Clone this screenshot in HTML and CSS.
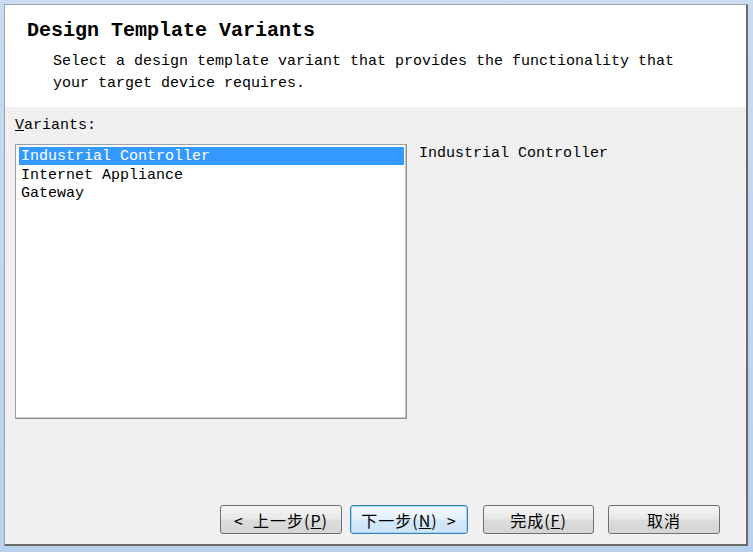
FILE: index.html
```html
<!DOCTYPE html>
<html lang="en">
<head>
  <meta charset="UTF-8">
  <title>Design Template Variants</title>
  <link rel="stylesheet" href="styles.css">
</head>
<body>

  <div class="window">

    <!-- Header -->
    <div class="header">
      <h1>Design Template Variants</h1>
      <p>Select a design template variant that provides the functionality that<br>your target device requires.</p>
    </div>

    <!-- Body -->
    <div class="panel">
      <div class="label"><u>V</u>ariants:</div>

      <div class="row">
        <div class="listbox">
          <div class="item selected">Industrial Controller</div>
          <div class="item">Internet Appliance</div>
          <div class="item">Gateway</div>
        </div>
        <div class="desc">Industrial Controller</div>
      </div>

      <!-- Wizard buttons -->
      <div class="buttons">
        <button class="btn btn-back">&lt;&nbsp; 上一步(<u>P</u>)</button>
        <button class="btn btn-next focused">下一步(<u>N</u>)&nbsp; &gt;</button>
        <button class="btn btn-finish">完成(<u>F</u>)</button>
        <button class="btn btn-cancel">取消</button>
      </div>
    </div>

  </div>

</body>
</html>
```

FILE: styles.css
```css
body {
  margin: 0;
  width: 753px;
  height: 552px;
  background: linear-gradient(#c9dcf0, #b9d1eb);
  font-family: "Liberation Mono", "Noto Sans CJK SC", monospace;
  color: #000;
  overflow: hidden;
}

.window {
  margin: 4px 5px 0 4px;
  width: 741px;
  height: 539px;
  border-left: 1px solid #9aa3ad;
  border-top: 1px solid #9aa3ad;
  border-right: 2px solid #6a6a6a;
  border-bottom: 2px solid #6a6a6a;
  display: flex;
  flex-direction: column;
}

.header {
  background-color: #fff;
  height: 102px;
  box-sizing: border-box;
  padding: 15px 0 0 22px;
}

.header h1 {
  margin: 0;
  font-size: 20px;
  line-height: 22px;
  font-weight: bold;
}

.header p {
  margin: 9px 0 0 26px;
  font-size: 15px;
  line-height: 22px;
}

.panel {
  flex: 1;
  background-color: #f0f0f0;
  padding: 10px 0 0 10px;
  display: flex;
  flex-direction: column;
}

.label {
  font-size: 15px;
  line-height: 18px;
}

.row {
  display: flex;
  gap: 12px;
  margin-top: 9px;
}

.listbox {
  width: 392px;
  height: 275px;
  box-sizing: border-box;
  background-color: #fff;
  border: 1px solid #a0a0a0;
  border-right-color: #8e8e8e;
  border-bottom-color: #8e8e8e;
  box-shadow: inset -1px -1px 0 #c8c8c8;
  padding: 2px 2px 0 3px;
}

.item {
  font-size: 15px;
  line-height: 18px;
  padding-left: 2px;
}

.item.selected {
  background-color: #3399ff;
  color: #fff;
  height: 18px;
  line-height: 20px;
  margin-bottom: 2px;
}

.desc {
  font-size: 15px;
  line-height: 18px;
  margin-top: 1px;
}

.buttons {
  display: flex;
  margin-top: auto;
  margin-bottom: 10px;
  padding-left: 205px;
}

.btn {
  height: 29px;
  box-sizing: border-box;
  border: 1px solid #707070;
  border-radius: 3px;
  background: linear-gradient(#f6f6f6 0%, #e8e8e8 48%, #dcdcdc 52%, #d4d4d4 100%);
  font-family: "Noto Sans CJK SC", "Liberation Sans", sans-serif;
  font-size: 16px;
  letter-spacing: 1px;
  padding: 0;
  color: #000;
}

.btn-back {
  width: 122px;
}

.btn-next {
  width: 118px;
  margin-left: 8px;
}

.btn-finish {
  width: 111px;
  margin-left: 15px;
}

.btn-cancel {
  width: 112px;
  margin-left: 14px;
}

.focused {
  border-color: #3c7fb1;
  box-shadow: inset 0 0 0 1px #9ed6f7;
  background: linear-gradient(#f4f9fd 0%, #e4f1fb 48%, #d4e8f8 52%, #cde4f7 100%);
}
```
